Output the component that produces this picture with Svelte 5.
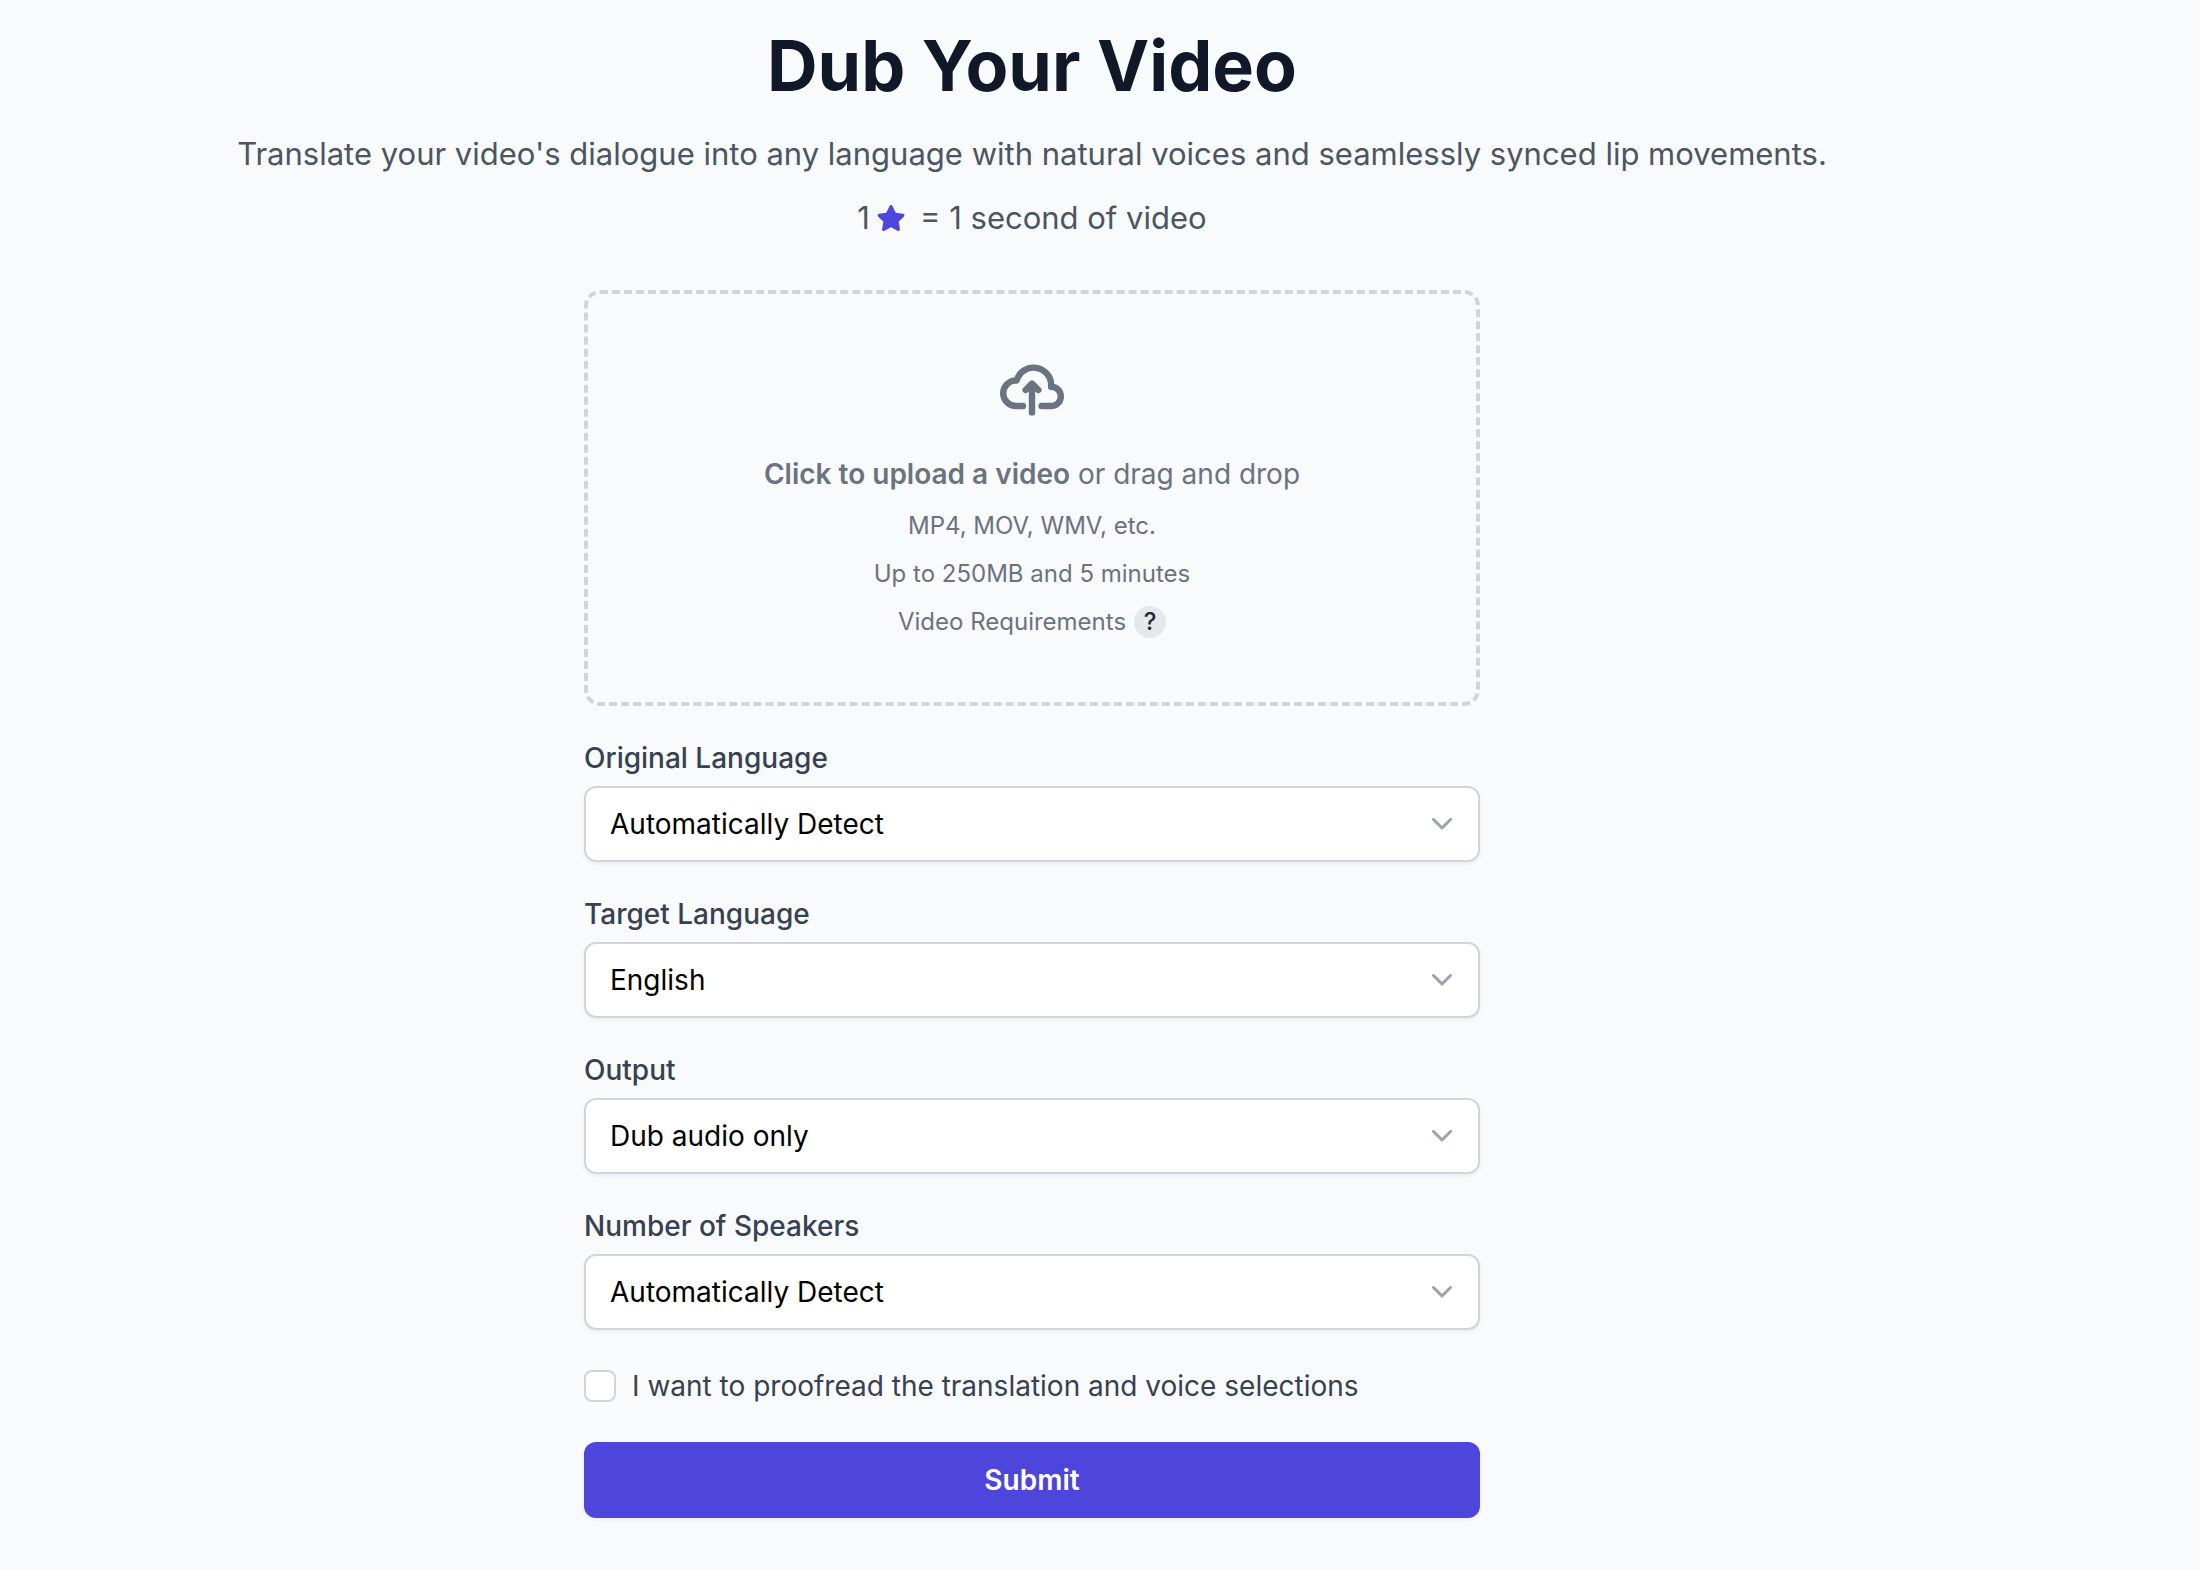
<script lang="ts">
  interface Field {
    id: string;
    label: string;
    value: string;
    options: string[];
  }

  let fields: Field[] = $state([
    {
      id: "original-language",
      label: "Original Language",
      value: "Automatically Detect",
      options: ["Automatically Detect"],
    },
    {
      id: "target-language",
      label: "Target Language",
      value: "English",
      options: ["English"],
    },
    {
      id: "output",
      label: "Output",
      value: "Dub audio only",
      options: ["Dub audio only"],
    },
    {
      id: "speakers",
      label: "Number of Speakers",
      value: "Automatically Detect",
      options: ["Automatically Detect"],
    },
  ]);

  let proofread = $state(false);

  function handleSubmit(event: SubmitEvent) {
    event.preventDefault();
  }
</script>

<main class="page">
  <header class="intro">
    <h1 class="title">Dub Your Video</h1>
    <p class="lead">
      Translate your video's dialogue into any language with natural voices and seamlessly synced lip movements.
    </p>
    <p class="price">
      <span>1</span>
      <svg class="star" viewBox="0 0 576 512" aria-hidden="true">
        <path
          d="M316.900 18C311.600 7 300.400 0 288.100 0s-23.400 7-28.800 18L195 150.300 51.400 171.500c-12 1.800-22 10.200-25.700 21.700s-.7 24.200 7.900 32.700L137.800 329 113.200 474.700c-2 12 3 24.200 12.900 31.300s23 8 33.800 2.300l128.300-68.500 128.300 68.500c10.800 5.700 23.900 4.900 33.800-2.300s14.900-19.300 12.900-31.300L438.500 329 542.700 225.900c8.600-8.500 11.700-21.200 7.900-32.700s-13.700-19.900-25.700-21.700L381.200 150.300 316.900 18z"
        />
      </svg>
      <span>= 1 second of video</span>
    </p>
  </header>

  <form class="form" onsubmit={handleSubmit}>
    <div class="dropzone">
      <label class="upload" for="video-file">
        <svg class="upload-icon" viewBox="0 0 20 16" fill="none" aria-hidden="true">
          <path
            d="M13 13h3a3 3 0 0 0 0-6h-.025A5.560 5.560 0 0 0 16 6.500 5.500 5.500 0 0 0 5.207 5.021C5.137 5.017 5.071 5 5 5a4 4 0 0 0 0 8h2.167M10 15V6m0 0L8 8m2-2 2 2"
          />
        </svg>
        <span class="upload-text"><strong>Click to upload a video</strong> or drag and drop</span>
        <span class="hint">MP4, MOV, WMV, etc.</span>
        <span class="hint">Up to 250MB and 5 minutes</span>
      </label>
      <input id="video-file" class="file" type="file" accept="video/*" />
      <div class="hint requirements">
        Video Requirements
        <button type="button" class="help">?</button>
      </div>
    </div>

    {#each fields as field (field.id)}
      <div class="field">
        <label class="label" for={field.id}>{field.label}</label>
        <div class="select-wrap">
          <select id={field.id} class="select" bind:value={field.value}>
            {#each field.options as option (option)}
              <option value={option}>{option}</option>
            {/each}
          </select>
          <svg class="chevron" viewBox="0 0 20 12" fill="none" aria-hidden="true">
            <path d="M1.500 1.500 10 10l8.500-8.500" />
          </svg>
        </div>
      </div>
    {/each}

    <label class="check">
      <input type="checkbox" class="checkbox" bind:checked={proofread} />
      I want to proofread the translation and voice selections
    </label>

    <button type="submit" class="submit">Submit</button>
  </form>
</main>

<style>
  :global(body) {
    margin: 0;
    background: #f9fafc;
  }

  .page {
    display: flex;
    flex-direction: column;
    align-items: center;
    gap: 48px;
    padding: 26px 136px 52px 0;
    font-family: Inter, "Liberation Sans", sans-serif;
    font-size: 28px;
    line-height: 40px;
    color: #374151;
  }

  .intro {
    display: flex;
    flex-direction: column;
    align-items: center;
    text-align: center;
    font-size: 31px;
    line-height: 48px;
    color: #4b5563;
  }

  .title {
    margin: 0 0 24px;
    font-size: 70px;
    font-weight: 700;
    line-height: 80px;
    color: #111827;
  }

  .lead {
    margin: 0 0 16px;
  }

  .price {
    display: flex;
    align-items: center;
    margin: 0;
  }

  .star {
    width: 30px;
    height: 26px;
    margin: 0 14px 0 6px;
    fill: #4e46dc;
  }

  .form {
    display: flex;
    flex-direction: column;
    width: 100%;
    max-width: 896px;
  }

  .dropzone {
    display: flex;
    flex-direction: column;
    align-items: center;
    margin-bottom: 32px;
    padding: 70px 32px 56px;
    border: 4px dashed #d1d5db;
    border-radius: 16px;
    color: #6b7280;
  }

  .upload {
    display: flex;
    flex-direction: column;
    align-items: center;
    cursor: pointer;
  }

  .upload-icon {
    width: 64px;
    height: 52px;
    margin-bottom: 38px;
    stroke: currentColor;
    stroke-width: 2;
    stroke-linecap: round;
    stroke-linejoin: round;
  }

  .upload-text {
    margin-bottom: 8px;
  }

  .upload-text strong {
    font-weight: 600;
  }

  .hint {
    font-size: 24px;
    line-height: 48px;
  }

  .file {
    display: none;
  }

  .requirements {
    display: flex;
    align-items: center;
    gap: 8px;
  }

  .help {
    width: 32px;
    height: 32px;
    padding: 0;
    border: 0;
    border-radius: 50%;
    background: #e5e7eb;
    font: inherit;
    font-weight: 500;
    line-height: 32px;
    color: #1f2937;
    cursor: pointer;
  }

  .field {
    display: flex;
    flex-direction: column;
    gap: 8px;
    margin-bottom: 32px;
  }

  .label {
    font-weight: 500;
  }

  .select-wrap {
    display: grid;
    align-items: center;
  }

  .select,
  .chevron {
    grid-area: 1 / 1;
  }

  .select {
    width: 100%;
    height: 76px;
    padding: 0 72px 0 24px;
    border: 2px solid #d1d5db;
    border-radius: 12px;
    background: #fff;
    box-shadow: 0 2px 4px rgb(0 0 0 / 0.05);
    font: inherit;
    color: #000;
    appearance: none;
    cursor: pointer;
  }

  .chevron {
    justify-self: end;
    width: 20px;
    height: 12px;
    margin-right: 28px;
    stroke: #9ca3af;
    stroke-width: 3;
    stroke-linecap: round;
    stroke-linejoin: round;
    pointer-events: none;
  }

  .check {
    display: flex;
    align-items: center;
    gap: 16px;
    margin: 4px 0 36px;
    cursor: pointer;
  }

  .checkbox {
    width: 32px;
    height: 32px;
    margin: 0;
    border: 2px solid #d1d5db;
    border-radius: 8px;
    background: #fff;
    appearance: none;
    cursor: pointer;
  }

  .checkbox:checked {
    border-color: #4e46dc;
    background: #4e46dc;
  }

  .submit {
    height: 76px;
    border: 0;
    border-radius: 12px;
    background: #4e46dc;
    box-shadow: 0 2px 4px rgb(0 0 0 / 0.05);
    font: inherit;
    font-weight: 600;
    color: #fff;
    cursor: pointer;
  }
</style>
